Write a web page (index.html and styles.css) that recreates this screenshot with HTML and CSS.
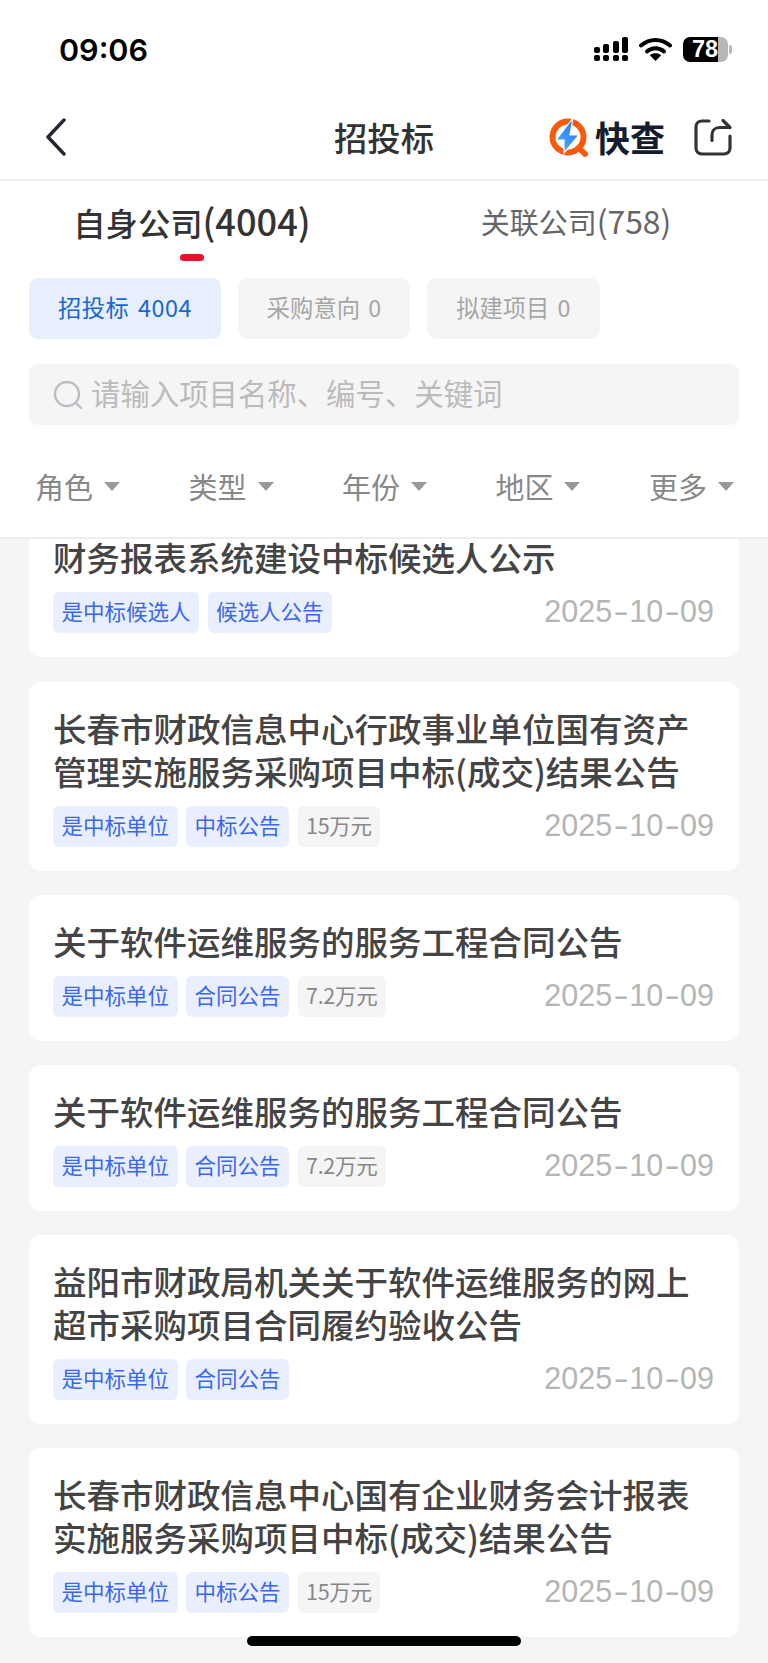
FILE: index.html
```html
<!DOCTYPE html>
<html>
<head>
    <title>招投标</title>
    <meta name="viewport" content="width=device-width,initial-scale=1.0">
    <link rel="stylesheet" href="styles.css">
</head>
<body>
    <div class="page">
        <div class="top">
            <div class="status">
                <span class="time">09:06</span>
                <div class="status-icons">
                    <svg class="signal" width="34" height="24" viewBox="0 0 34 24">
                        <g fill="#000">
                            <rect x="0" y="10" width="6" height="6" rx="2"/>
                            <rect x="0" y="18" width="6" height="6" rx="2"/>
                            <rect x="9" y="7" width="6" height="9" rx="2"/>
                            <rect x="9" y="18" width="6" height="6" rx="2"/>
                            <rect x="19" y="4" width="6" height="12" rx="2"/>
                            <rect x="19" y="18" width="6" height="6" rx="2"/>
                            <rect x="28" y="0" width="6" height="16" rx="2"/>
                            <rect x="28" y="18" width="6" height="6" rx="2"/>
                        </g>
                    </svg>
                    <svg class="wifi" width="33" height="24" viewBox="0 0 33 24">
                        <path d="M2 8.5C10.5 1 22.5 1 31 8.5" fill="none" stroke="#000" stroke-width="4" stroke-linecap="round"/>
                        <path d="M8 14.5C13 10.2 20 10.2 25 14.5" fill="none" stroke="#000" stroke-width="4" stroke-linecap="round"/>
                        <path d="M16.5 24L10.8 18.2C14 15.6 19 15.6 22.2 18.2Z" fill="#000"/>
                    </svg>
                    <div class="battery"><div class="battery-body"><span>78</span></div><i class="battery-cap"></i></div>
                </div>
            </div>
            <div class="nav">
                <svg class="back" width="24" height="38" viewBox="0 0 24 38">
                    <path d="M20 2L4 19L20 36" fill="none" stroke="#222733" stroke-width="3.4" stroke-linecap="round" stroke-linejoin="round"/>
                </svg>
                <h1>招投标</h1>
                <div class="brand">
                    <svg width="40" height="40" viewBox="0 0 40 40">
                        <defs>
                            <linearGradient id="bolt" x1="0" y1="1" x2="1" y2="0">
                                <stop offset="0" stop-color="#55b6ff"/>
                                <stop offset="1" stop-color="#1f6cf2"/>
                            </linearGradient>
                        </defs>
                        <circle cx="19" cy="20" r="15.5" fill="none" stroke="#fb5a0d" stroke-width="6"/>
                        <path d="M30 31L36 37" stroke="#fb5a0d" stroke-width="6" stroke-linecap="round"/>
                        <path d="M24 1L7 23H15L15 36L30 18H21Z" fill="url(#bolt)" stroke="#fff" stroke-width="1.2"/>
                    </svg>
                    <span>快查</span>
                </div>
                <svg class="share" width="40" height="38" viewBox="0 0 40 38">
                    <path d="M16 3H9C5.5 3 3 5.5 3 9V30C3 33.5 5.5 36 9 36H31C34.5 36 37 33.5 37 30V18" fill="none" stroke="#333" stroke-width="3.2" stroke-linecap="round"/>
                    <path d="M19 22.5V17C19 12.5 22 9.5 26.5 9.5H36.5M30 2.5L37 9.5" fill="none" stroke="#333" stroke-width="3.2" stroke-linecap="round" stroke-linejoin="round"/>
                </svg>
            </div>
            <div class="tabs">
                <div class="tab tab-on">自身公司<span class="num">(4004)</span><i></i></div>
                <div class="tab">关联公司<span class="num">(758)</span></div>
            </div>
            <div class="chips">
                <div class="chip chip-on">招投标 4004</div>
                <div class="chip">采购意向 0</div>
                <div class="chip">拟建项目 0</div>
            </div>
            <div class="search">
                <svg width="30" height="30" viewBox="0 0 30 30">
                    <circle cx="14" cy="14" r="12" fill="none" stroke="#b9bdc4" stroke-width="2.4"/>
                    <path d="M23 23L28 28" stroke="#b9bdc4" stroke-width="2.4" stroke-linecap="round"/>
                </svg>
                <span>请输入项目名称、编号、关键词</span>
            </div>
            <div class="filters">
                <div class="filter">角色<i></i></div>
                <div class="filter">类型<i></i></div>
                <div class="filter">年份<i></i></div>
                <div class="filter">地区<i></i></div>
                <div class="filter">更多<i></i></div>
            </div>
        </div>
        <div class="list">
            <div class="card">
                <p class="title">财务报表系统建设中标候选人公示</p>
                <div class="meta">
                    <span class="tag">是中标候选人</span>
                    <span class="tag">候选人公告</span>
                    <span class="date">2025<b>-</b>10<b>-</b>09</span>
                </div>
            </div>
            <div class="card">
                <p class="title">长春市财政信息中心行政事业单位国有资产<br>管理实施服务采购项目中标(成交)结果公告</p>
                <div class="meta">
                    <span class="tag">是中标单位</span>
                    <span class="tag">中标公告</span>
                    <span class="tag tag-gray">15万元</span>
                    <span class="date">2025<b>-</b>10<b>-</b>09</span>
                </div>
            </div>
            <div class="card">
                <p class="title">关于软件运维服务的服务工程合同公告</p>
                <div class="meta">
                    <span class="tag">是中标单位</span>
                    <span class="tag">合同公告</span>
                    <span class="tag tag-gray">7.2万元</span>
                    <span class="date">2025<b>-</b>10<b>-</b>09</span>
                </div>
            </div>
            <div class="card">
                <p class="title">关于软件运维服务的服务工程合同公告</p>
                <div class="meta">
                    <span class="tag">是中标单位</span>
                    <span class="tag">合同公告</span>
                    <span class="tag tag-gray">7.2万元</span>
                    <span class="date">2025<b>-</b>10<b>-</b>09</span>
                </div>
            </div>
            <div class="card">
                <p class="title">益阳市财政局机关关于软件运维服务的网上<br>超市采购项目合同履约验收公告</p>
                <div class="meta">
                    <span class="tag">是中标单位</span>
                    <span class="tag">合同公告</span>
                    <span class="date">2025<b>-</b>10<b>-</b>09</span>
                </div>
            </div>
            <div class="card">
                <p class="title">长春市财政信息中心国有企业财务会计报表<br>实施服务采购项目中标(成交)结果公告</p>
                <div class="meta">
                    <span class="tag">是中标单位</span>
                    <span class="tag">中标公告</span>
                    <span class="tag tag-gray">15万元</span>
                    <span class="date">2025<b>-</b>10<b>-</b>09</span>
                </div>
            </div>
            <div class="home-bar"></div>
        </div>
    </div>
</body>
</html>
```

FILE: styles.css
```css
*{
    box-sizing: border-box;
}

html, body{
    margin: 0;
    padding: 0;
}

body{
    font-family: "Noto Sans CJK SC", "Noto Sans", sans-serif;
    background: #f5f5f5;
}

.page{
    display: flex;
    flex-direction: column;
    width: 768px;
    height: 1663px;
    overflow: hidden;
}

.top{
    height: 539px;
    flex: none;
    background: #fff;
    border-bottom: 2px solid #eeeeee;
}

.status{
    display: flex;
    justify-content: space-between;
    align-items: center;
    height: 98px;
    padding: 0 36px 0 59px;
}

.time{
    font-family: "Inter", sans-serif;
    font-size: 30.5px;
    font-weight: 600;
    color: #000;
}

.status-icons{
    display: flex;
    align-items: center;
    gap: 11px;
}

.battery{
    display: flex;
    align-items: center;
}

.battery-body{
    width: 45px;
    height: 25px;
    border-radius: 7px;
    background: linear-gradient(90deg, #000 77%, #b8b8b8 77%);
    color: #fff;
    font-family: "Liberation Sans", sans-serif;
    font-size: 23.5px;
    font-weight: 700;
    line-height: 25px;
    padding-left: 9px;
}

.battery-cap{
    width: 3px;
    height: 9px;
    margin-left: 1px;
    border-radius: 0 3px 3px 0;
    background: #b8b8b8;
}

.nav{
    position: relative;
    display: flex;
    align-items: center;
    height: 83px;
    padding: 0 35px 4px 44px;
    border-bottom: 2px solid #eeeeee;
}

.nav h1{
    position: absolute;
    left: 0;
    right: 0;
    margin: 0;
    text-align: center;
    font-size: 33.3px;
    font-weight: 500;
    color: #333;
}

.brand{
    display: flex;
    align-items: center;
    margin-left: auto;
    margin-right: 28px;
    z-index: 1;
}

.brand span{
    font-size: 35px;
    font-weight: 700;
    line-height: 40px;
    color: #141c2e;
    margin-left: 6px;
}

.share{
    z-index: 1;
}

.tabs{
    display: flex;
    height: 82px;
}

.tab{
    position: relative;
    width: 50%;
    padding-top: 16px;
    text-align: center;
    font-size: 29px;
    line-height: 46px;
    color: #666;
}

.tab-on{
    font-size: 32.3px;
    font-weight: 500;
    color: #333;
}

.tab .num{
    font-size: 1.1em;
}

.tab-on .num{
    font-size: 1.12em;
}

.tab i{
    position: absolute;
    left: 180px;
    top: 73px;
    width: 24px;
    height: 7px;
    border-radius: 4px;
    background: #e8112d;
}

.chips{
    display: flex;
    gap: 17px;
    padding: 15px 29px 0;
}

.chip{
    padding: 0 29px;
    height: 61px;
    border-radius: 9px;
    background: #f5f5f5;
    color: #a6a6a6;
    font-size: 23.3px;
    line-height: 58px;
    word-spacing: 3px;
}

.chip-on{
    background: #e6effb;
    color: #1668d4;
    letter-spacing: 0.5px;
}

.search{
    display: flex;
    align-items: center;
    gap: 8px;
    height: 61px;
    margin: 25px 29px 0;
    padding-left: 24px;
    border-radius: 9px;
    background: #f5f5f5;
    color: #bbbbbb;
    font-size: 29.4px;
}

.search span{
    padding-bottom: 5px;
}

.filters{
    display: flex;
    justify-content: space-between;
    padding: 41px 34px 0 35px;
}

.filter{
    display: flex;
    align-items: center;
    gap: 11px;
    font-size: 29px;
    line-height: 40px;
    color: #888;
}

.filter i{
    width: 0;
    height: 0;
    border-left: 8px solid transparent;
    border-right: 8px solid transparent;
    border-top: 9px solid #999;
}

.list{
    position: relative;
    flex: 1;
    overflow: hidden;
    padding: 0 29px;
}

.card{
    margin-bottom: 24px;
    padding: 24px 25px 24px 24px;
    border-radius: 12px;
    background: #fff;
}

.card:first-child{
    margin-top: -28px;
    margin-bottom: 25px;
}

.title{
    margin: 0 0 14px;
    font-size: 33.5px;
    font-weight: 500;
    line-height: 43px;
    color: #444;
    white-space: nowrap;
}

.meta{
    display: flex;
    align-items: center;
    gap: 8.5px;
    height: 41px;
}

.tag{
    height: 41px;
    padding: 0 8.5px;
    border-radius: 6px;
    background: #e9effe;
    color: #3a66f6;
    font-size: 21.5px;
    line-height: 38px;
}

.tag-gray{
    background: #f5f5f5;
    color: #888;
    letter-spacing: -0.3px;
}

.date{
    margin-left: auto;
    padding-bottom: 2px;
    font-family: "Liberation Sans", sans-serif;
    font-size: 30.5px;
    color: #b5b5b5;
}

.date b{
    display: inline-block;
    margin: 0 3.4px;
    font-weight: 400;
    transform: scaleX(1.5);
}

.home-bar{
    position: absolute;
    left: 247px;
    top: 1097px;
    width: 274px;
    height: 10px;
    border-radius: 5px;
    background: #000;
}
```
